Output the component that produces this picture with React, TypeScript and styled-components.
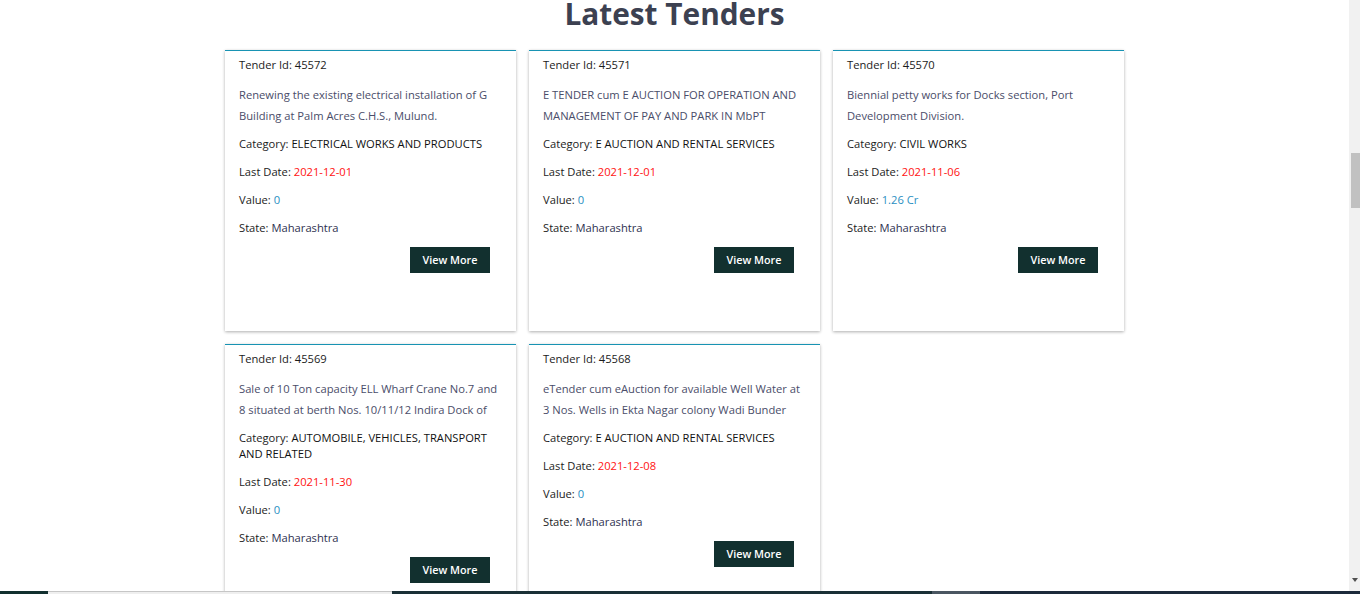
import React from "react";
import styled, { createGlobalStyle } from "styled-components";

const GlobalStyle = createGlobalStyle`
  html, body {
    margin: 0;
    padding: 0;
    width: 1360px;
    height: 594px;
    overflow: hidden;
    background: #ffffff;
    font-family: "Open Sans", "Noto Sans", sans-serif;
  }
  * { box-sizing: border-box; }
`;

type Tender = {
  id: number;
  desc: string;
  category: string;
  lastDate: string;
  value: string;
  state: string;
};

const tenders: Tender[] = [
  {
    id: 45572,
    desc: "Renewing the existing electrical installation of G Building at Palm Acres C.H.S., Mulund.",
    category: "ELECTRICAL WORKS AND PRODUCTS",
    lastDate: "2021-12-01",
    value: "0",
    state: "Maharashtra",
  },
  {
    id: 45571,
    desc: "E TENDER cum E AUCTION FOR OPERATION AND MANAGEMENT OF PAY AND PARK IN MbPT PREMISES AT VARIOUS LOCATIONS",
    category: "E AUCTION AND RENTAL SERVICES",
    lastDate: "2021-12-01",
    value: "0",
    state: "Maharashtra",
  },
  {
    id: 45570,
    desc: "Biennial petty works for Docks section, Port Development Division.",
    category: "CIVIL WORKS",
    lastDate: "2021-11-06",
    value: "1.26 Cr",
    state: "Maharashtra",
  },
  {
    id: 45569,
    desc: "Sale of 10 Ton capacity ELL Wharf Crane No.7 and 8 situated at berth Nos. 10/11/12 Indira Dock of Mumbai Port Trust",
    category: "AUTOMOBILE, VEHICLES, TRANSPORT AND RELATED",
    lastDate: "2021-11-30",
    value: "0",
    state: "Maharashtra",
  },
  {
    id: 45568,
    desc: "eTender cum eAuction for available Well Water at 3 Nos. Wells in Ekta Nagar colony Wadi Bunder",
    category: "E AUCTION AND RENTAL SERVICES",
    lastDate: "2021-12-08",
    value: "0",
    state: "Maharashtra",
  },
];

const Page = styled.div`
  width: 1360px;
  height: 594px;
  display: flex;
  flex-direction: column;
`;

const Viewport = styled.div`
  display: flex;
  flex: 1;
  min-height: 0;
`;

const Main = styled.main`
  flex: 1;
  overflow: hidden;
  background: #ffffff;
`;

const Title = styled.h2`
  margin: 0 0 22px;
  text-align: center;
  font-family: "Open Sans", sans-serif;
  font-weight: 700;
  font-size: 29.8px;
  line-height: 28px;
  color: #3c4151;
`;

const Grid = styled.div`
  display: grid;
  grid-template-columns: repeat(3, 291px);
  gap: 13px;
  justify-content: center;
  align-items: start;
`;

const Card = styled.article`
  background: #ffffff;
  border-top: 1px solid #1893b3;
  box-shadow: 0 1px 3px rgba(0, 0, 0, 0.32);
  padding: 6px 15px 58px 14px;
  font-size: 11.2px;
  color: #1c1c1c;
`;

const Line = styled.div<{ $mb?: number }>`
  line-height: 16px;
  margin-bottom: ${(p) => (p.$mb ?? 12)}px;
`;

const Desc = styled.div`
  line-height: 21px;
  height: 42px;
  overflow: hidden;
  margin-bottom: 10px;
  color: #4a4d69;
`;

const Val = styled.span<{ $tone?: "red" | "blue" | "navy" | "dark" }>`
  color: ${(p) =>
    p.$tone === "red"
      ? "#ff1212"
      : p.$tone === "blue"
      ? "#2a8fc2"
      : p.$tone === "navy"
      ? "#2e3050"
      : "#111111"};
`;

const ButtonRow = styled.div`
  display: flex;
  justify-content: flex-end;
  margin-top: -1px;
  padding-right: 11px;
`;

const ViewButton = styled.button`
  width: 80px;
  height: 26px;
  border: none;
  border-radius: 0;
  background: #12302f;
  color: #ffffff;
  font-family: "Open Sans", sans-serif;
  font-weight: 600;
  font-size: 10.8px;
  padding: 0 0 2px;
  cursor: pointer;
`;

const VScroll = styled.div`
  width: 11px;
  background: #f1f1f1;
  display: flex;
  flex-direction: column;
  align-items: flex-end;
`;

const Thumb = styled.div`
  width: 9px;
  height: 55px;
  margin-top: 153px;
  background: #c1c1c1;
`;

const DownArrow = styled.div`
  margin-top: auto;
  margin-bottom: 9px;
  margin-right: 2px;
  width: 0;
  height: 0;
  border-left: 3.5px solid transparent;
  border-right: 3.5px solid transparent;
  border-top: 4px solid #505050;
`;

const Strip = styled.div`
  height: 3px;
  display: flex;
`;

const Seg = styled.div<{ $w?: number; $bg: string; $top?: string }>`
  ${(p) => (p.$w ? `width: ${p.$w}px;` : "flex: 1;")}
  background: ${(p) => p.$bg};
  ${(p) => (p.$top ? `border-top: 1px solid ${p.$top};` : "")}
`;

function TenderCard({ t }: { t: Tender }) {
  return (
    <Card>
      <Line $mb={11}>Tender Id: {t.id}</Line>
      <Desc>{t.desc}</Desc>
      <Line>
        Category: <Val>{t.category}</Val>
      </Line>
      <Line>
        Last Date: <Val $tone="red">{t.lastDate}</Val>
      </Line>
      <Line>
        Value: <Val $tone="blue">{t.value}</Val>
      </Line>
      <Line>
        State: <Val $tone="navy">{t.state}</Val>
      </Line>
      <ButtonRow>
        <ViewButton type="button">View More</ViewButton>
      </ButtonRow>
    </Card>
  );
}

export default function App() {
  return (
    <Page>
      <GlobalStyle />
      <Viewport>
        <Main>
          <Title>Latest Tenders</Title>
          <Grid>
            {tenders.map((t) => (
              <TenderCard key={t.id} t={t} />
            ))}
          </Grid>
        </Main>
        <VScroll>
          <Thumb />
          <DownArrow />
        </VScroll>
      </Viewport>
      <Strip>
        <Seg $w={48} $bg="#12302f" />
        <Seg $w={344} $bg="#efefef" $top="#c6c6c6" />
        <Seg $w={540} $bg="#1a3036" />
        <Seg $w={48} $bg="#4a5661" />
        <Seg $bg="#1c2a3b" />
      </Strip>
    </Page>
  );
}
